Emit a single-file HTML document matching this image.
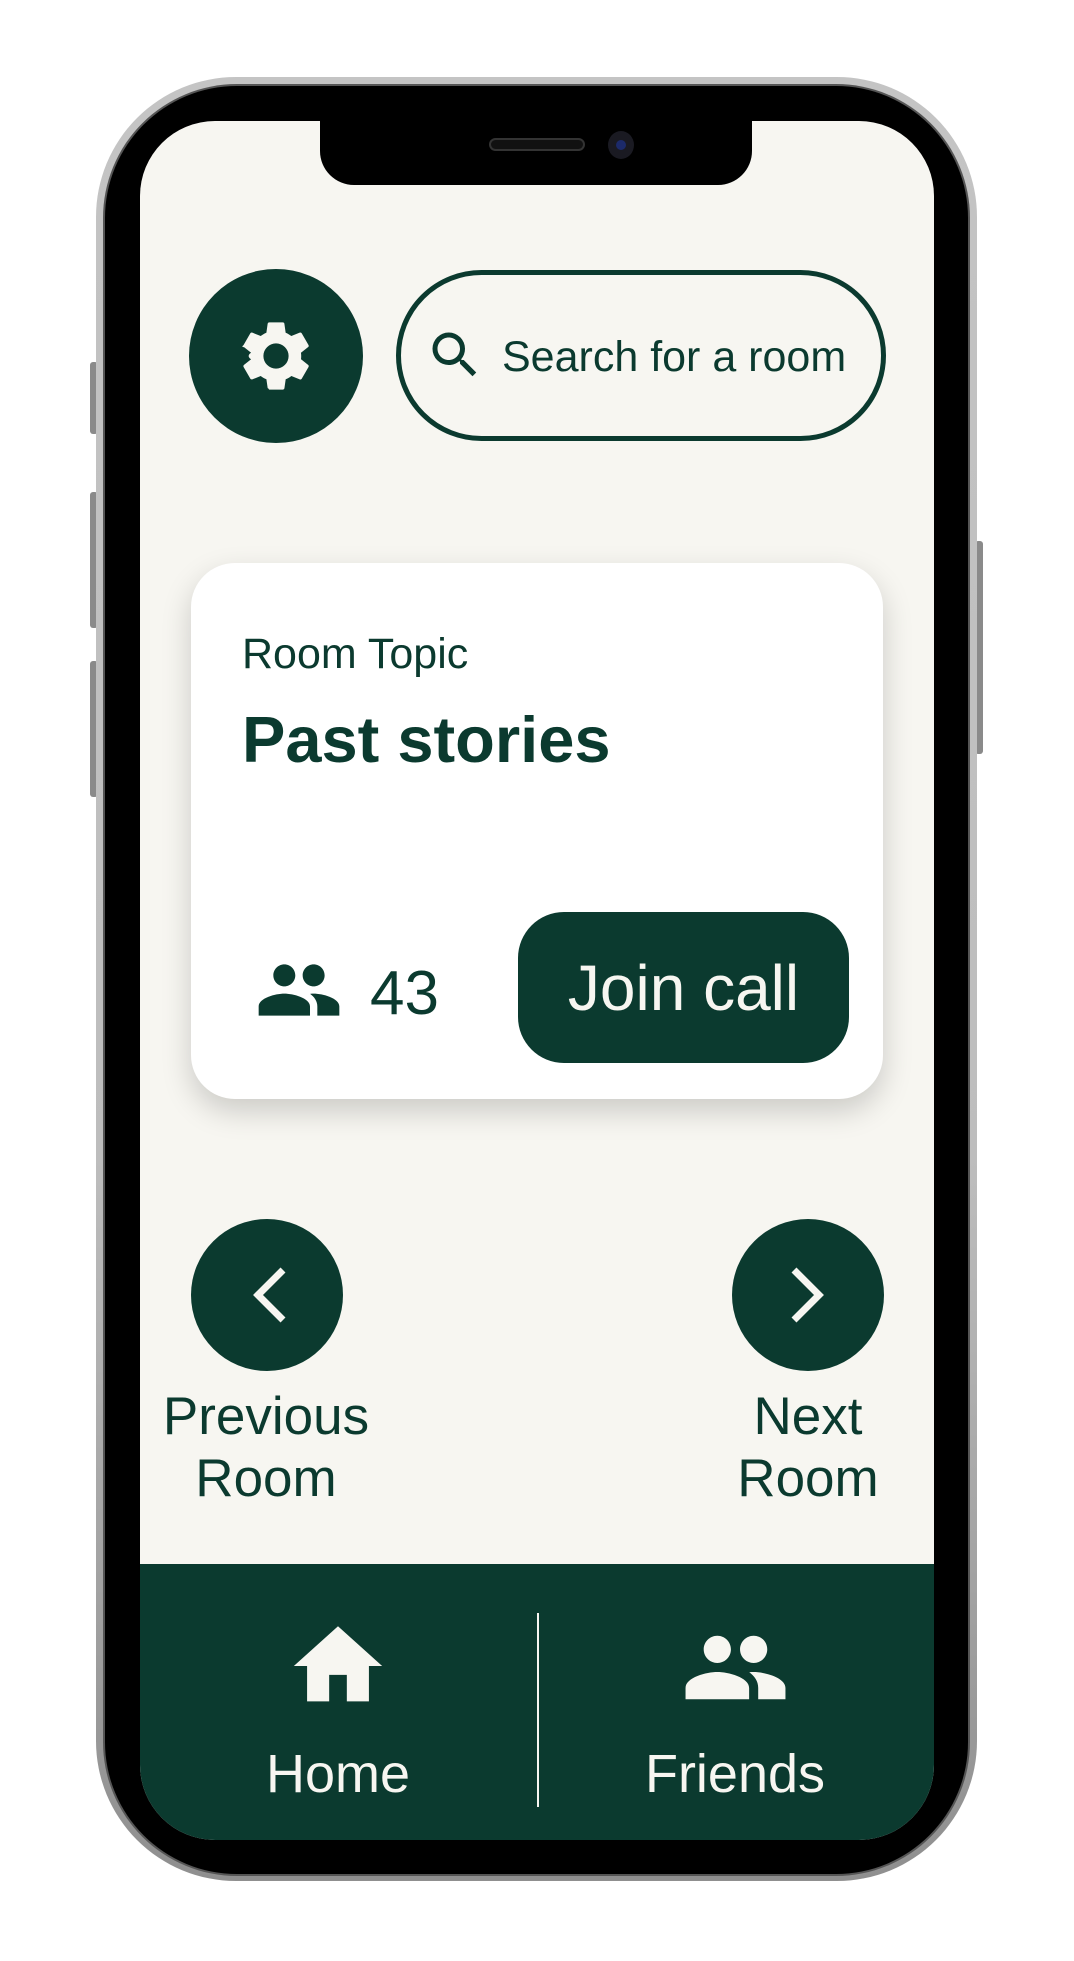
<!DOCTYPE html>
<html><head><meta charset="utf-8"><style>
*{margin:0;padding:0;box-sizing:border-box}
body{width:1074px;height:1961px;background:#fff;position:relative;overflow:hidden;font-family:"Liberation Sans",Arial,sans-serif;color:#0b3a2f}
.abs{position:absolute}
.frame{left:96px;top:77px;width:881px;height:1804px;border-radius:140px;background:linear-gradient(#c4c4c4,#bdbdbd 60%,#8f8f8f)}
.body{left:105px;top:86px;width:863px;height:1788px;border-radius:132px;background:#000;box-shadow:0 0 0 2px #555}
.screen{left:140px;top:121px;width:794px;height:1719px;border-radius:75px;background:#f7f6f1;overflow:hidden}
.btn{background:#8a8a8a;border-radius:3px}
.t{position:absolute;white-space:nowrap}
</style></head><body>
<div class="abs btn" style="left:90px;top:362px;width:8px;height:72px"></div>
<div class="abs btn" style="left:90px;top:492px;width:8px;height:136px"></div>
<div class="abs btn" style="left:90px;top:661px;width:8px;height:136px"></div>
<div class="abs btn" style="left:975px;top:541px;width:8px;height:213px"></div>
<div class="abs frame"></div>
<div class="abs body"></div>
<div class="abs screen">
  <div class="abs" style="left:0;top:1443px;width:794px;height:276px;background:#0b3a2f"></div>
</div>
<!-- notch -->
<div class="abs" style="left:320px;top:110px;width:432px;height:75px;background:#000;border-radius:0 0 34px 34px"></div>
<div class="abs" style="left:489px;top:138px;width:96px;height:13px;border-radius:7px;background:#111;border:2px solid #333"></div>
<div class="abs" style="left:608px;top:131px;width:26px;height:28px;border-radius:50%;background:#1a1a22"></div>
<div class="abs" style="left:616px;top:140px;width:10px;height:10px;border-radius:50%;background:#1c2a6a"></div>

<!-- gear -->
<div class="abs" style="left:189px;top:269px;width:174px;height:174px;border-radius:50%;background:#0b3a2f"></div>
<svg class="abs" style="left:234px;top:314px" width="84" height="84" viewBox="0 0 24 24"><path fill="#f7f6f1" d="M19.14 12.94c.04-.3.06-.61.06-.94 0-.32-.02-.64-.07-.94l2.03-1.58a.49.49 0 0 0 .12-.61l-1.92-3.320a.49.49 0 0 0-.59-.22l-2.39.96c-.5-.38-1.03-.7-1.62-.94l-.36-2.54a.48.48 0 0 0-.48-.41h-3.84c-.24 0-.43.17-.47.41l-.36 2.54c-.59.24-1.13.57-1.62.94l-2.39-.96a.48.48 0 0 0-.59.22L2.74 8.87c-.12.21-.8.47.12.61l2.03 1.58c-.5.3-.7.63-.7.94s.2.64.7.94l-2.03 1.58a.49.49 0 0 0-.12.61l1.92 3.32c.12.22.37.29.59.22l2.39-.96c.5.38 1.03.7 1.62.94l.36 2.54c.5.24.24.41.48.41h3.84c.24 0 .44-.17.47-.41l.36-2.54c.59-.24 1.130-.56 1.62-.94l2.39.96c.22.08.47 0 .59-.22l1.92-3.32c.12-.22.07-.47-.12-.61l-2.01-1.58zM12 15.6A3.6 3.6 0 1 1 12 8.4a3.6 3.6 0 0 1 0 7.2z"/></svg>

<!-- search -->
<div class="abs" style="left:396px;top:270px;width:490px;height:171px;border-radius:86px;border:5px solid #0b3a2f"></div>
<svg class="abs" style="left:425px;top:325px" width="60" height="60" viewBox="0 0 24 24"><path fill="#0b3a2f" d="M15.5 14h-.79l-.28-.27A6.47 6.47 0 0 0 16 9.5 6.5 6.5 0 1 0 9.5 16c1.61 0 3.09-.59 4.230-1.57l.27.28v.79l5 4.99L20.49 19l-4.99-5zm-6 0C7.01 14 5 11.990 5 9.5S7.01 5 9.5 5 14 7.01 14 9.5 11.99 14 9.5 14z"/></svg>
<div class="t" style="left:502px;top:333px;font-size:43px">Search for a room</div>

<!-- card -->
<div class="abs" style="left:191px;top:563px;width:692px;height:536px;border-radius:44px;background:#fff;box-shadow:0 12px 30px rgba(0,0,0,.18)"></div>
<div class="t" style="left:242px;top:630px;font-size:43px">Room Topic</div>
<div class="t" style="left:242px;top:702px;font-size:65px;font-weight:bold">Past stories</div>
<svg class="abs" style="left:255px;top:946px" width="88" height="88" viewBox="0 0 24 24"><path fill="#0b3a2f" d="M16 11c1.66 0 2.99-1.34 2.99-3S17.66 5 16 5c-1.66 0-3 1.34-3 3s1.34 3 3 3zm-8 0c1.66 0 2.99-1.34 2.99-3S9.66 5 8 5C6.34 5 5 6.34 5 8s1.34 3 3 3zm0 2c-2.33 0-7 1.17-7 3.5V19h14v-2.5c0-2.33-4.67-3.5-7-3.5zm8 0c-.29 0-.62.02-.97.05 1.16.84 1.97 1.97 1.97 3.45V19h6v-2.5c0-2.33-4.67-3.5-7-3.5z"/></svg>
<div class="t" style="left:370px;top:958px;font-size:62px">43</div>
<div class="abs" style="left:518px;top:912px;width:331px;height:151px;border-radius:46px;background:#0b3a2f"></div>
<div class="t" style="left:518px;top:951px;width:331px;text-align:center;font-size:64px;color:#f7f6f1">Join call</div>

<!-- nav circles -->
<div class="abs" style="left:191px;top:1219px;width:152px;height:152px;border-radius:50%;background:#0b3a2f"></div>
<svg class="abs" style="left:191px;top:1219px" width="152" height="152"><polyline points="92,51 67,76 92,101" fill="none" stroke="#f7f6f1" stroke-width="7"/></svg>
<div class="abs" style="left:732px;top:1219px;width:152px;height:152px;border-radius:50%;background:#0b3a2f"></div>
<svg class="abs" style="left:732px;top:1219px" width="152" height="152"><polyline points="62,51 87,76 62,101" fill="none" stroke="#f7f6f1" stroke-width="7"/></svg>
<div class="t" style="left:146px;top:1386px;width:240px;text-align:center;font-size:53px;line-height:62px">Previous<br>Room</div>
<div class="t" style="left:688px;top:1386px;width:240px;text-align:center;font-size:53px;line-height:62px">Next<br>Room</div>

<!-- tab bar -->
<div class="abs" style="left:537px;top:1613px;width:2px;height:194px;background:#f7f6f1"></div>
<svg class="abs" style="left:285px;top:1613px" width="106" height="106" viewBox="0 0 24 24"><path fill="#f7f6f1" d="M10 20v-6h4v6h5v-8h3L12 3 2 12h3v8z"/></svg>
<svg class="abs" style="left:681px;top:1613px" width="109" height="109" viewBox="0 0 24 24"><path fill="#f7f6f1" d="M16 11c1.66 0 2.99-1.34 2.99-3S17.66 5 16 5c-1.66 0-3 1.34-3 3s1.34 3 3 3zm-8 0c1.66 0 2.99-1.34 2.99-3S9.66 5 8 5C6.34 5 5 6.34 5 8s1.34 3 3 3zm0 2c-2.33 0-7 1.17-7 3.5V19h14v-2.5c0-2.33-4.67-3.5-7-3.5zm8 0c-.29 0-.62.02-.97.05 1.16.84 1.97 1.97 1.97 3.45V19h6v-2.5c0-2.33-4.67-3.5-7-3.5z"/></svg>
<div class="t" style="left:218px;top:1743px;width:240px;text-align:center;font-size:54px;color:#f7f6f1">Home</div>
<div class="t" style="left:615px;top:1743px;width:240px;text-align:center;font-size:54px;color:#f7f6f1">Friends</div>
</body></html>
